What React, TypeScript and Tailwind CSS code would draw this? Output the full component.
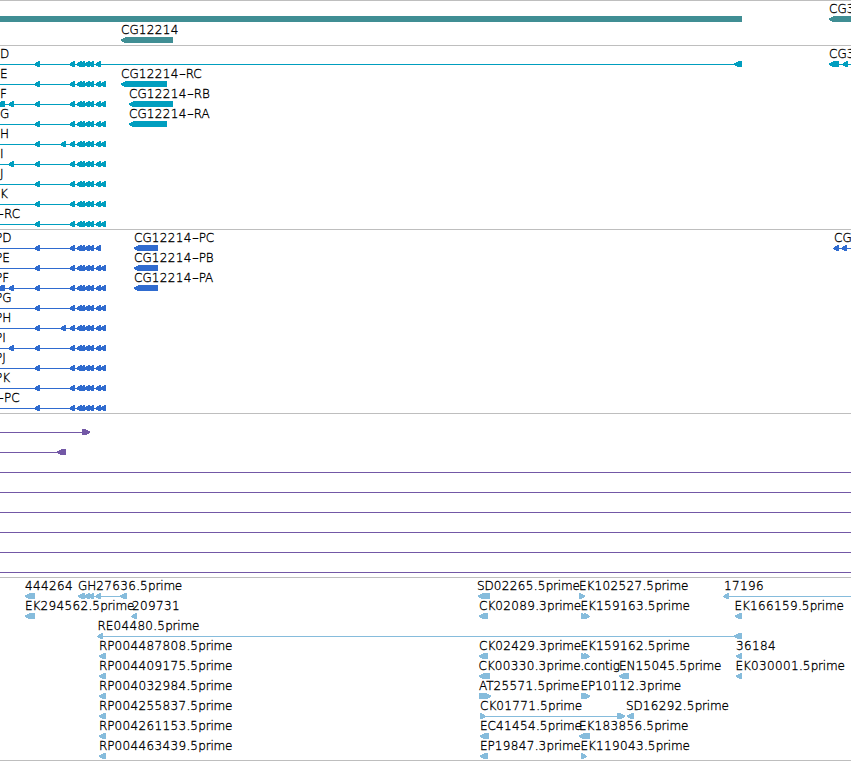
type Label = [x: number, text: string];
// Positive direction points right, negative points left.
type Feature = [start: number, end: number, dir: 1 | -1];
type Row = { labels?: Label[]; lines?: [number, number][]; features?: Feature[] };

const HEAD = 5;

function featurePoints([start, end, dir]: Feature) {
  const small = end - start <= HEAD;
  const head = small ? 3.4 : HEAD - 0.4;
  const tip = small ? 0.7 : 0.4;
  return dir < 0
    ? `${start - tip},3.5 ${start - tip},3 ${start + head},0 ${end},0 ${end},6 ${start + head},6 ${start - tip},4`
    : `${end + tip},3.5 ${end + tip},3 ${end - head},0 ${start},0 ${start},6 ${end - head},6 ${end + tip},4`;
}

function tracking(part: string) {
  if (/\d/.test(part)) return 'tracking-[0.35px]';
  if (/[a-z]/.test(part)) return 'tracking-[-0.2px]';
  return 'tracking-[0px]';
}

function LabelText({ text }: { text: string }) {
  return (
    <>
      {text.split(/(-|\d+)/).map((part, i) => {
        if (part === '-') {
          return <span key={i} className="inline-block w-[7px] origin-left scale-x-[1.6]">-</span>;
        }
        return <span key={i} className={tracking(part)}>{part}</span>;
      })}
    </>
  );
}

function TrackRow({ row, height }: { row: Row; height: string }) {
  return (
    <div className={`relative flex flex-col ${height}`}>
      <div className="h-[15px] shrink-0">
        {row.labels?.map(([x, text]) => (
          <span
            key={text}
            className="absolute top-0 whitespace-pre text-[12px] font-extralight leading-[17px] text-black [-webkit-text-stroke:0.32px_black]"
            style={{ left: x }}
          >
            <LabelText text={text} />
          </span>
        ))}
      </div>
      <svg className="block h-[6px] w-[851px] shrink-0" viewBox="0 0 851 6" fill="currentColor" shapeRendering="crispEdges">
        {row.lines?.map(([a, b]) => <rect key={a} x={a} y={3} width={b - a} height={1} />)}
        {row.features?.map((f, i) => <polygon key={i} points={featurePoints(f)} />)}
      </svg>
    </div>
  );
}

function Track({ rows, className, rowHeight = 'h-5' }: { rows: Row[]; className: string; rowHeight?: string }) {
  return (
    <section className={`shrink-0 border-t border-[#bebebe] ${className}`}>
      {rows.map((row, i) => (
        <TrackRow key={i} row={row} height={rowHeight} />
      ))}
    </section>
  );
}

const left = (start: number, end = start + HEAD): Feature => [start, end, -1];
const right = (start: number, end = start + HEAD): Feature => [start, end, 1];

const exons = [35, 70, 77, 80, 85, 89, 96].map((x) => left(x));
const allExons = [...exons, left(101)];

function isoform(labels: Label[], extra: Feature[] = []): Row {
  return { labels, lines: [[0, 106]], features: [...allExons, ...extra] };
}

const genes: Row[] = [
  { labels: [[829, 'CG3']], features: [left(-10, 742), left(829, 860)] },
  { labels: [[121, 'CG12214']], features: [left(121, 173)] },
];

const transcripts: Row[] = [
  {
    labels: [[0, 'D'], [829, 'CG3']],
    lines: [[0, 742], [829, 851]],
    features: [...exons, left(734, 742), left(829, 839), left(843)],
  },
  isoform([[0, 'E'], [121, 'CG12214-RC']], [left(121, 167)]),
  isoform([[0, 'F'], [129, 'CG12214-RB']], [left(-3, 5), left(9), left(129, 173)]),
  isoform([[0, 'G'], [129, 'CG12214-RA']], [left(129, 167)]),
  isoform([[0, 'H']], [left(61)]),
  isoform([[0, 'I']], [left(9)]),
  isoform([[0, 'J']]),
  isoform([[0, 'K']]),
  isoform([[-3, '-RC']]),
];

const proteins: Row[] = [
  {
    labels: [[-5, 'PD'], [134, 'CG12214-PC'], [834, 'CG']],
    lines: [[0, 101], [834, 851]],
    features: [...exons, left(134, 158), left(834), left(842)],
  },
  isoform([[-5, 'PE'], [134, 'CG12214-PB']], [left(134, 158)]),
  isoform([[-5, 'PF'], [134, 'CG12214-PA']], [left(-3, 5), left(9), left(134, 158)]),
  isoform([[-5, 'PG']]),
  isoform([[-5, 'PH']], [left(61)]),
  isoform([[-5, 'PI']], [left(9)]),
  isoform([[-5, 'PJ']]),
  isoform([[-5, 'PK']]),
  isoform([[-3, '-PC']]),
];

const fullLine: Row = { lines: [[0, 851]] };
const insertions: Row[] = [
  { lines: [[0, 90]], features: [right(82, 90)] },
  { lines: [[0, 66]], features: [left(57, 66)] },
  fullLine, fullLine, fullLine, fullLine, fullLine, fullLine,
];

const ests: Row[] = [
  {
    labels: [[25, '444264'], [78, 'GH27636.5prime'], [477, 'SD02265.5prime'], [579, 'EK102527.5prime'], [724, '17196']],
    lines: [[78, 127], [724, 851]],
    features: [left(25, 35), left(78, 85), left(85), left(89), left(96), left(120, 127), left(478, 490), right(579, 585), left(724)],
  },
  {
    labels: [[25, 'EK294562.5prime'], [132, '209731'], [479, 'CK02089.3prime'], [580.5, 'EK159163.5prime'], [734.5, 'EK166159.5prime']],
    features: [left(25, 35), left(132), left(479, 488), right(581), right(584), left(735, 742)],
  },
  {
    labels: [[97.5, 'RE04480.5prime']],
    lines: [[98, 742]],
    features: [left(98), left(734, 742)],
  },
  {
    labels: [[99, 'RP004487808.5prime'], [479, 'CK02429.3prime'], [580.5, 'EK159162.5prime'], [736, '36184']],
    features: [left(99, 106), left(479, 488), right(581), right(584), left(736, 742)],
  },
  {
    labels: [[99, 'RP004409175.5prime'], [478.5, 'CK00330.3prime.contig'], [619, 'EN15045.5prime'], [735.5, 'EK030001.5prime']],
    features: [left(99, 106), left(479, 490), left(619, 629), left(736, 742)],
  },
  {
    labels: [[99, 'RP004032984.5prime'], [479, 'AT25571.5prime'], [580.5, 'EP10112.3prime']],
    features: [left(99, 106), right(479, 491), right(581, 590)],
  },
  {
    labels: [[99, 'RP004255837.5prime'], [480, 'CK01771.5prime'], [626, 'SD16292.5prime']],
    lines: [[480, 625]],
    features: [left(99, 106), right(480), right(617, 625), left(627, 634)],
  },
  {
    labels: [[99, 'RP004261153.5prime'], [480, 'EC41454.5prime'], [579, 'EK183856.5prime']],
    features: [left(99, 106), left(480, 489), left(579, 590)],
  },
  {
    labels: [[99, 'RP004463439.5prime'], [480, 'EP19847.3prime'], [580.5, 'EK119043.5prime']],
    features: [left(99, 106), left(480, 488), right(581)],
  },
];

export default function App() {
  return (
    <main className="flex h-[761px] w-[851px] flex-col overflow-hidden border-b border-[#bebebe] bg-white font-['DejaVu_Sans',sans-serif]">
      <Track rows={genes} rowHeight="h-[21px]" className="h-[45px] text-[#408e94]" />
      <Track rows={transcripts} className="h-[184px] text-[#009ebf]" />
      <Track rows={proteins} className="h-[184px] text-[#2f6bcf]" />
      <Track rows={insertions} className="h-[164px] text-[#7358a6]" />
      <Track rows={ests} className="h-[183px] text-[#86bcdc]" />
    </main>
  );
}
